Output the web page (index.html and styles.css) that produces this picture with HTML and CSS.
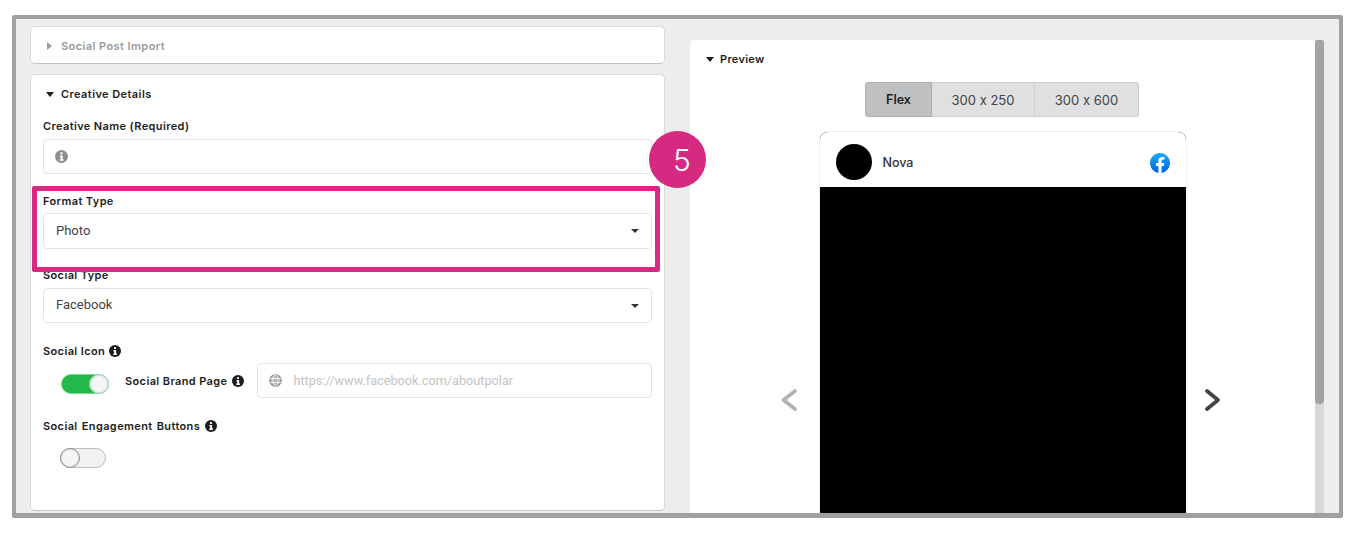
FILE: index.html
```html
<!DOCTYPE html>
<html lang="en">
<head>
<meta charset="utf-8">
<title>Creative Details</title>
<link rel="stylesheet" href="styles.css">
</head>
<body>
<svg class="defs" width="0" height="0" aria-hidden="true">
  <defs>
    <symbol id="info" viewBox="0 0 12 12">
      <circle cx="6" cy="6" r="6" fill="currentColor"/>
      <rect x="5" y="2.2" width="2" height="1.8" fill="#fff"/>
      <path d="M4.5 5h2.6v3.6h.8V10H4.3V8.6h.9V6.4h-.7z" fill="#fff"/>
    </symbol>
    <linearGradient id="fbg" x1="0" y1="0" x2="0" y2="1">
      <stop offset="0" stop-color="#18acfe"/>
      <stop offset="1" stop-color="#0163e0"/>
    </linearGradient>
  </defs>
</svg>
<div class="frame">
  <div class="left">
    <section class="card card-collapsed">
      <svg class="caret-right" width="5" height="8" viewBox="0 0 5 8"><path d="M0 0l5 4-5 4z" fill="#999"/></svg>
      <span class="title title-muted">Social Post Import</span>
    </section>
    <section class="card card-form">
      <div class="form-head">
        <svg class="caret-down" width="8" height="5" viewBox="0 0 8 5"><path d="M0 0h8L4 5z" fill="#1d1d1d"/></svg>
        <span class="title">Creative Details</span>
      </div>
      <div class="field field-name">
        <div class="label">Creative Name (Required)</div>
        <div class="input">
          <svg class="icon-info-grey" width="13" height="13"><use href="#info"/></svg>
        </div>
      </div>
      <div class="field field-format">
        <div class="label">Format Type</div>
        <div class="input input-select input-tall"><span>Photo</span><i class="select-caret"></i></div>
      </div>
      <div class="field field-social">
        <div class="label">Social Type</div>
        <div class="input input-select"><span>Facebook</span><i class="select-caret"></i></div>
      </div>
      <div class="field field-icon">
        <div class="label label-icon">Social Icon <svg class="icon-info" width="12" height="12"><use href="#info"/></svg></div>
        <div class="brand-row">
          <div class="toggle toggle-on"><i class="knob"></i></div>
          <div class="label label-brand">Social Brand Page <svg class="icon-info" width="12" height="12"><use href="#info"/></svg></div>
          <div class="input input-url">
            <svg class="globe" width="13" height="13" viewBox="0 0 13 13" fill="none" stroke="#8b8b8b" stroke-width="1.2">
              <circle cx="6.5" cy="6.5" r="5.7" fill="#b5b5b5"/>
              <ellipse cx="6.5" cy="6.5" rx="2.6" ry="5.7" stroke="#fff" stroke-width=".8"/>
              <path d="M1 4.5h11M1 8.5h11" stroke="#fff" stroke-width=".8"/>
            </svg>
            <span class="placeholder">https://www.facebook.com/aboutpolar</span>
          </div>
        </div>
      </div>
      <div class="field field-engage">
        <div class="label label-icon">Social Engagement Buttons <svg class="icon-info" width="12" height="12"><use href="#info"/></svg></div>
        <div class="toggle toggle-off"><i class="knob"></i></div>
      </div>
    </section>
  </div>
  <section class="preview">
    <div class="preview-head">
      <svg class="caret-down" width="8" height="5" viewBox="0 0 8 5"><path d="M0 0h8L4 5z" fill="#1d1d1d"/></svg>
      <span class="title">Preview</span>
    </div>
    <div class="tabs">
      <div class="tab tab-active">Flex</div>
      <div class="tab tab-250">300 x 250</div>
      <div class="tab tab-600">300 x 600</div>
    </div>
    <div class="carousel">
      <svg class="arrow arrow-prev" width="18" height="24" viewBox="0 0 18 24"><path d="M15 3 3.500 12 15 21" fill="none" stroke="#b4b4b4" stroke-width="3.800" stroke-linecap="round" stroke-linejoin="round"/></svg>
      <div class="ad">
        <div class="ad-head">
          <div class="avatar"></div>
          <div class="brand-name">Nova</div>
          <svg class="fb" width="20" height="20" viewBox="0 0 24 24">
            <circle cx="12" cy="12" r="12" fill="#fff"/>
            <path fill="url(#fbg)" d="M24 12.073c0-6.627-5.373-12-12-12s-12 5.373-12 12c0 5.990 4.388 10.954 10.125 11.854v-8.385H7.078v-3.470h3.047V9.430c0-3.007 1.792-4.669 4.533-4.669 1.312 0 2.686.235 2.686.235v2.953H15.830c-1.491 0-1.956.925-1.956 1.874v2.250h3.328l-.532 3.470h-2.796v8.385C19.612 23.027 24 18.062 24 12.073z"/>
          </svg>
        </div>
        <div class="ad-media"></div>
      </div>
      <svg class="arrow arrow-next" width="18" height="24" viewBox="0 0 18 24"><path d="M3 3 14 12 3 21" fill="none" stroke="#444" stroke-width="3.800" stroke-linecap="round" stroke-linejoin="round"/></svg>
    </div>
  </section>
  <div class="scrollbar"><div class="thumb"></div></div>
  <div class="highlight"></div>
  <div class="badge">5</div>
</div>
</body>
</html>
```
FILE: styles.css
```css
* { box-sizing: border-box; }
html, body { margin: 0; padding: 0; background: #fff; }
body { height: 536px; overflow: hidden; font-family: "Inter", "Liberation Sans", sans-serif; font-feature-settings: "calt" 0; color: #1d1d1d; }
.defs { position: absolute; }
svg { display: block; flex: none; }

.frame {
  position: relative;
  display: flex;
  align-items: flex-start;
  width: 1331px;
  height: 503px;
  margin: 15px 0 0 12px;
  border: solid #a0a0a0;
  border-width: 4px 4px 5px;
  border-radius: 2px;
  background: #ededed;
  overflow: hidden;
}

.left {
  display: flex;
  flex-direction: column;
  gap: 10px;
  width: 635px;
  margin: 7px 0 0 14px;
  flex: none;
}
.card {
  background: #fff;
  border: 1px solid #d9d9d9;
  border-bottom-color: #c4c4c4;
  border-radius: 5px;
}
.card-collapsed {
  display: flex;
  align-items: center;
  gap: 9px;
  height: 38px;
  padding: 1px 0 0 16px;
}
.card-form { height: 437px; padding: 0 12px 0 12px; }
.title { font-size: 11px; font-weight: 600; letter-spacing: .42px; line-height: 14px; }
.title-muted { color: #999; }
.form-head { display: flex; align-items: center; gap: 7px; height: 38px; padding: 0 0 0 3px; }

.field { margin-bottom: 20px; }
.field-name { margin-top: 6px; }
.field-name .label { margin-bottom: 6px; }
.field-format { margin-bottom: 19px; }
.field-social { margin-bottom: 21px; }
.field-social .label { margin-bottom: 6px; }
.field-icon { margin-bottom: 21px; }
.field-icon .label-icon { margin-bottom: 5px; gap: 4px; }
.field-engage .label-icon { word-spacing: 1px; }
.label {
  display: block;
  height: 14px;
  margin-bottom: 5px;
  font-size: 11px;
  font-weight: 600;
  letter-spacing: .38px;
  line-height: 14px;
  white-space: nowrap;
}
.label-icon, .label-brand { display: flex; align-items: center; gap: 5px; margin-bottom: 0; }
.input {
  display: flex;
  align-items: center;
  height: 35px;
  padding: 0 12px;
  background: #fff;
  border: 1px solid #e3e3e3;
  border-radius: 4px;
  font-family: "Roboto", "Liberation Sans", sans-serif;
  font-size: 13px;
  color: #444;
}
.input-tall { height: 36px; }
.input-select { justify-content: space-between; padding-right: 12px; }
.input-select span { position: relative; top: -1px; }
.field-social .input-select span { top: -1.500px; }
.icon-info-grey { color: #8d8d8d; margin-left: -1px; }
.icon-info { color: #1d1d1d; }
.select-caret {
  width: 0; height: 0;
  border-style: solid;
  border-width: 4px 4px 0;
  border-color: #333 transparent transparent;
}

.brand-row { display: flex; align-items: center; }
.toggle { position: relative; flex: none; border-radius: 10px; }
.knob { position: absolute; display: block; border-radius: 50%; background: #f5f5f5; }
.toggle-on {
  width: 48px; height: 20px;
  margin: 6px 0 0 18px;
  background: #22b84a;
  border: 1px solid #7fd695;
}
.toggle-on .knob { right: -1px; top: -1px; width: 20px; height: 20px; border: 1px solid #9ed7ad; box-shadow: inset 0 0 2px #bbb; }
.toggle-off {
  width: 46px; height: 20px;
  margin: 15px 0 0 17px;
  background: #f1f1f1;
  border: 1px solid #bdbdbd;
}
.toggle-off .knob { left: -1px; top: -1px; width: 20px; height: 20px; border: 1px solid #8e8e8e; box-shadow: inset 0 0 2px #bbb; }
.label-brand { margin-left: 16px; }
.input-url { flex: 1; margin-left: 13px; padding-left: 11px; gap: 11px; }
.placeholder { color: #c4c4c4; font-size: 12.700px; }

.preview {
  width: 625px;
  height: 474px;
  margin: 21px 0 0 25px;
  padding-top: 12px;
  background: #fff;
  border-radius: 4px 4px 0 0;
  overflow: hidden;
  flex: none;
}
.preview-head { display: flex; align-items: center; gap: 6px; height: 14px; padding-left: 16px; }
.preview-head .title { letter-spacing: .3px; }
.tabs { display: flex; justify-content: center; margin: 16px 1px 0 0; }
.tab {
  height: 35px;
  padding: 0;
  display: flex;
  align-items: center;
  justify-content: center;
  background: #dfe0e2;
  border: 1px solid #cfd0d2;
  border-left: 0;
  font-family: "Inter", "Liberation Sans", sans-serif;
  font-size: 13px;
  color: #444;
}
.tab-active {
  width: 67px;
  border-left: 1px solid #b5b6b8;
  border-radius: 3px 0 0 3px;
  background: #bfc0c2;
  border-color: #b0b1b3;
  font-size: 12.500px;
  font-weight: 600;
  color: #1d1d1d;
}
.tab-250 { width: 103px; }
.tab-600 { width: 104px; border-radius: 0 3px 3px 0; }

.carousel {
  display: flex;
  align-items: center;
  justify-content: center;
  gap: 22px;
  margin-top: 15px;
}
.ad { width: 366px; height: 536px; background: #000; border-radius: 8px 8px 0 0; overflow: hidden; box-shadow: 0 0 0 1px #f1f1f1; }
.ad-head { display: flex; align-items: center; height: 55px; padding: 4px 16px 0; background: #fff; }
.avatar { width: 36px; height: 36px; border-radius: 50%; background: #000; }
.brand-name { flex: 1; margin: 2px 0 0 11px; font-family: "Inter", "Liberation Sans", sans-serif; font-size: 12.500px; font-weight: 500; color: #333; }
.fb { margin-top: 2px; }
.arrow-next { margin: 0 4px 0 -4px; }

.scrollbar {
  width: 9px;
  height: 474px;
  margin-top: 21px;
  background: #d8d8d8;
  flex: none;
}
.thumb { height: 364px; background: #a3a3a3; border-radius: 3px 3px 4px 4px; }

.highlight {
  position: absolute;
  left: 16px;
  top: 167px;
  width: 628px;
  height: 86px;
  border: 5px solid #d62a82;
  border-radius: 2px;
}
.badge {
  position: absolute;
  left: 633px;
  top: 112px;
  width: 57px;
  height: 57px;
  padding-left: 9px;
  border-radius: 50%;
  background: #d62a82;
  color: #fff;
  display: flex;
  align-items: center;
  justify-content: center;
  font-family: "Inter", "Liberation Sans", sans-serif;
  font-weight: 300;
  font-size: 30px;
}
```
